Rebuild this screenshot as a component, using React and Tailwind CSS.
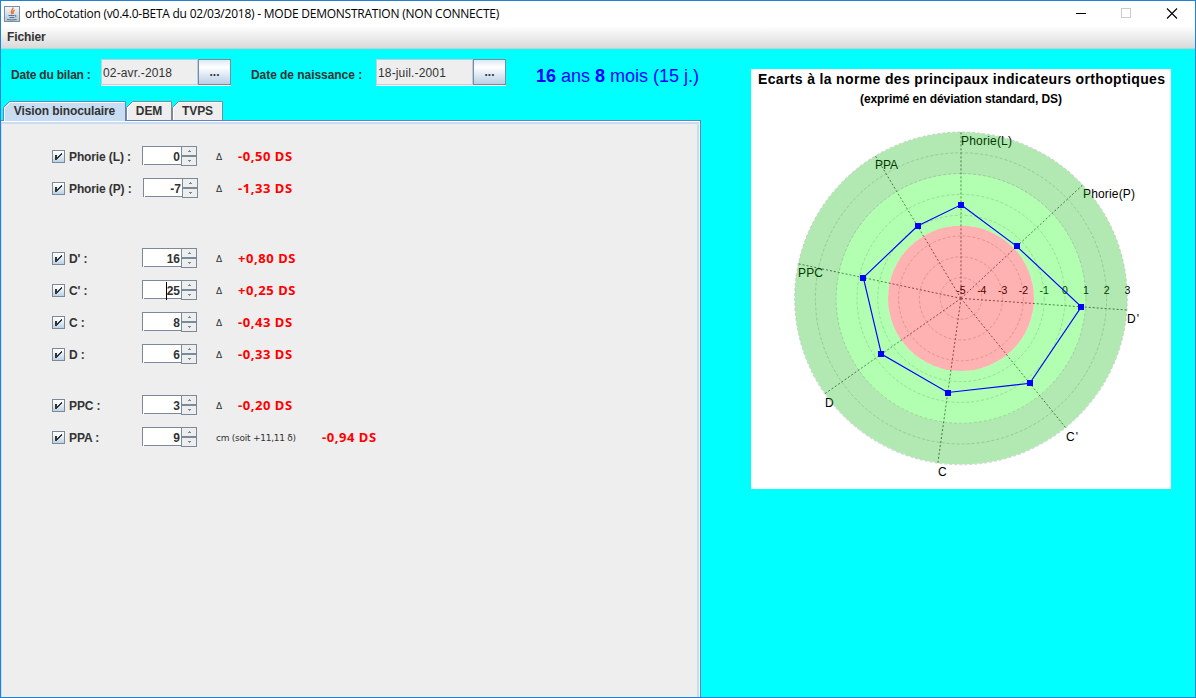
const ROWS = [
  { label: "Phorie (L) :", value: "0", ds: "-0,50 DS", gap: "mt-0" },
  { label: "Phorie (P) :", value: "-7", ds: "-1,33 DS", gap: "mt-0", inset: true },
  { label: "D' :", value: "16", ds: "+0,80 DS", gap: "mt-[38px]" },
  { label: "C' :", value: "25", ds: "+0,25 DS", gap: "mt-0", caret: true },
  { label: "C :", value: "8", ds: "-0,43 DS", gap: "mt-0" },
  { label: "D :", value: "6", ds: "-0,33 DS", gap: "mt-0" },
  { label: "PPC :", value: "3", ds: "-0,20 DS", gap: "mt-[19px]" },
  { label: "PPA :", value: "9", ds: "-0,94 DS", gap: "mt-0", unit: "cm (soit +11,11 δ)" },
];

const AXES = [
  { name: "Phorie(L)", value: -0.5, x: 210, y: 76, w: 51 },
  { name: "Phorie(P)", value: -1.33, x: 332, y: 129, w: 52 },
  { name: "D'", value: 0.8, x: 376, y: 254, w: 12 },
  { name: "C'", value: 0.25, x: 315, y: 372, w: 12 },
  { name: "C", value: -0.43, x: 187, y: 407, w: 8 },
  { name: "D", value: -0.33, x: 74, y: 338, w: 8 },
  { name: "PPC", value: -0.2, x: 47, y: 208, w: 25 },
  { name: "PPA", value: -0.94, x: 124, y: 100, w: 23 },
];
const CX = 210;
const CY = 229.4;
const UNIT = 20.8;
const STEP = (47 * Math.PI) / 180;
const at = (i, r) => [CX + r * Math.sin(i * STEP), CY - r * Math.cos(i * STEP)];

function Radar() {
  const pts = AXES.map((a, i) => at(i, (a.value + 5) * UNIT));
  return (
    <svg width="420" height="420" viewBox="0 0 420 420" className="block bg-white" fontFamily="'Liberation Sans', Arial, sans-serif">
      <text x="7" y="15" fontSize="14" fontWeight="700" textLength="407">Ecarts à la norme des principaux indicateurs orthoptiques</text>
      <text x="109" y="34" fontSize="12" fontWeight="700" textLength="202">(exprimé en déviation standard, DS)</text>
      {[1, 2, 3, 4, 5, 6, 7, 8].map((n) => (
        <circle key={n} cx={CX} cy={CY} r={n * UNIT} fill="none" stroke="#d4d4d4" strokeWidth="1" strokeDasharray="3 2" />
      ))}
      {AXES.map((a, i) => {
        const [x, y] = at(i, 8 * UNIT);
        return <line key={a.name} x1={CX} y1={CY} x2={x} y2={y} stroke="#606060" strokeWidth="1" strokeDasharray="2 2" />;
      })}
      {AXES.map((a) => (
        <text key={a.name} x={a.x} y={a.y} fontSize="12" textLength={a.w}>{a.name}</text>
      ))}
      {[-5, -4, -3, -2, -1, 0, 1, 2, 3].map((v, i) => (
        <text key={v} x={CX + i * UNIT} y="225" fontSize="10.5" textAnchor="middle">{v}</text>
      ))}
      <g fillOpacity="0.3">
        <path fill="#00b200" fillRule="evenodd" d="M210 63.3a166.2 166 0 1 0 .01 0zM210 105a124.7 124.7 0 1 0 .01 0z" />
        <path fill="#00ff00" fillRule="evenodd" d="M210 105a124.7 124.7 0 1 0 .01 0zM210 156.7a73 72.7 0 1 0 .01 0z" />
        <ellipse fill="#ff0000" cx="210" cy="229.4" rx="73" ry="72.7" />
      </g>
      <polygon points={pts.map((p) => p.join(",")).join(" ")} fill="none" stroke="#0000ff" strokeWidth="1.15" />
      {pts.map(([x, y], i) => (
        <rect key={i} x={Math.round(x) - 3} y={Math.round(y) - 3} width="6" height="6" fill="#0000ff" shapeRendering="crispEdges" />
      ))}
    </svg>
  );
}

function DateField({ value }) {
  return (
    <div className="flex h-[27px] bg-white pb-px">
      <div className="h-[26px] w-[97px] border border-[#b8cfe5] bg-[#eeeeee] pl-px text-[12px] leading-[27px] text-[#333]">
        <span className="tracking-[0.15px]">{value}</span>
      </div>
      <button className="h-[26px] w-[33px] border border-[#7a8a99] bg-linear-to-b from-[#dde8f3] via-white via-30% to-[#b8cfe5] text-[12px] leading-[24px] font-bold text-[#333]">...</button>
    </div>
  );
}

function Arrow({ up }) {
  return (
    <div className="flex h-[10px] w-[16px] items-center justify-center border border-[#7a8a99] bg-[#eeeeee]">
      <svg width="3" height="2" viewBox="0 0 3 2" shapeRendering="crispEdges">
        <path fill="#7a8a99" d={up ? "M1 0h1v1h1v1h-3v-1h1z" : "M0 0h3v1h-1v1h-1v-1h-1z"} />
      </svg>
    </div>
  );
}

function Row({ row }) {
  return (
    <div className={"flex h-[32px] items-center " + row.gap}>
      <svg width="13" height="13" viewBox="0 0 13 13" className="mr-[4px] shrink-0">
        <defs>
          <linearGradient id="check" x1="0" y1="0" x2="0" y2="1">
            <stop offset="0" stopColor="#ffffff" />
            <stop offset="0.3" stopColor="#f2f7fb" />
            <stop offset="1" stopColor="#b8cfe5" />
          </linearGradient>
        </defs>
        <rect x="0.5" y="0.5" width="12" height="12" fill="url(#check)" stroke="#7a8a99" />
        <path fill="#333" shapeRendering="crispEdges" d="M3 5h2v2h1v-1h1v-1h1v-1h1v-1h1v2h-1v1h-1v1h-1v1h-1v1h-1v1h-2z" />
      </svg>
      <div className={"pt-px text-[12px] font-bold tracking-[-0.12px] whitespace-nowrap text-[#333] " + (row.inset ? "w-[74px]" : "w-[73px]")}>{row.label}</div>
      <div className={"flex h-[20px] w-[55px] " + (row.inset ? "mr-[18px]" : "mr-[19px]")}>
        <div className="h-[19px] w-[39px] border-t border-l border-[#7a8a99] bg-white pb-px">
          <div className="ml-px flex h-[18px] items-center justify-end border-b border-[#7a8a99] pt-[2px] pr-px text-[12px] font-bold text-[#333]">
            <span className={row.caret ? "border-l border-black" : ""}>{row.value}</span>
          </div>
        </div>
        <div className="w-[16px]"><Arrow up /><Arrow /></div>
      </div>
      <div className={"pt-[4px] font-['DejaVu_Sans'] whitespace-nowrap text-[#333] " + (row.unit ? "w-[106px] text-[9px] tracking-[-0.25px]" : "w-[22px] text-[9px]")}>{row.unit || "Δ"}</div>
      <div className="pt-[2px] font-['Noto_Sans',sans-serif] text-[13px] font-bold tracking-[0.55px] whitespace-nowrap text-[#ff0000]">{row.ds}</div>
    </div>
  );
}

function Tab({ label, width, active }) {
  const edge = width - 0.5;
  return (
    <div className="relative flex h-[20px] items-center justify-center" style={{ width }}>
      <svg className="absolute inset-0" width={width} height="20">
        <path d={`M0.5 20V6.5L6.5 0.5H${edge}V20`} fill={active ? "#c8ddf2" : "#eeeeee"} stroke={active ? "#6382bf" : "#7a8a99"} />
        <path d={`M1.5 20V7L7 1.5H${width - 1}`} fill="none" stroke="#fff" />
        {!active && <path d={`M0 19.5H${width}`} stroke="#6382bf" />}
      </svg>
      <span className="relative text-[12px] font-bold tracking-[-0.1px] whitespace-nowrap text-[#333]">{label}</span>
    </div>
  );
}

export default function App() {
  return (
    <div className="flex h-[698px] w-[1196px] flex-col overflow-hidden border border-[#1f82d6] bg-[#00ffff] font-['Liberation_Sans',Arial,sans-serif]">
      <header className="flex h-[25px] shrink-0 items-center bg-white">
        <svg className="ml-[3px]" width="16" height="16" viewBox="0 0 16 16">
          <defs>
            <linearGradient id="app" x1="0" y1="0" x2="0" y2="1">
              <stop offset="0" stopColor="#f8f8f8" />
              <stop offset="1" stopColor="#b4c6d4" />
            </linearGradient>
          </defs>
          <rect x="0.5" y="0.5" width="15" height="15" fill="url(#app)" stroke="#7590a5" />
          <path d="M8.8 1.5C10 3.5 5.5 5 8 8M10.8 4C8.5 5.2 8.5 6.2 9.3 8" fill="none" stroke="#e8702f" strokeWidth="1.3" />
          <path d="M4.5 9.5h6M5.5 11.5h4.5M3 13.5q4.500 1 9.500 0M10.800 9.300q2.500 0 0 2.200" fill="none" stroke="#4d7595" />
        </svg>
        <span className="ml-[5px] font-['Open_Sans',sans-serif] text-[12px] tracking-[-0.23px] whitespace-nowrap text-black">orthoCotation (v0.4.0-BETA du 02/03/2018) - MODE DEMONSTRATION (NON CONNECTE)</span>
        <svg className="ml-auto" width="120" height="25" viewBox="0 0 120 25">
          <path d="M1 12.5h10" stroke="#000" />
          <rect x="46.5" y="7.5" width="9" height="9" fill="none" stroke="#ccc" />
          <path d="M92 7.5l10 10M102 7.5l-10 10" stroke="#000" strokeWidth="1.1" />
        </svg>
      </header>
      <nav className="flex h-[23px] shrink-0 items-center border-b border-[#ccc] bg-linear-to-b from-white to-[#dadada] pl-[6px] text-[12px] font-bold tracking-[-0.1px] text-[#333]">Fichier</nav>
      <main className="flex grow">
        <section className="flex w-[700px] flex-col">
          <div className="flex h-[52px] shrink-0 items-start pt-[10px] pl-[10px] text-[12px] font-bold text-[#333]">
            <span className="mt-[7px] w-[90px] tracking-[-0.2px] whitespace-nowrap">Date du bilan :</span>
            <div className="font-normal"><DateField value="02-avr.-2018" /></div>
            <span className="mt-[7px] ml-[20px] w-[125px] tracking-[-0.05px] whitespace-nowrap">Date de naissance :</span>
            <div className="font-normal"><DateField value="18-juil.-2001" /></div>
            <span className="mt-[4px] ml-[30px] text-[18px] font-normal whitespace-nowrap text-[#0000ff]"><b>16</b> ans <b>8</b> mois (15 j.)</span>
          </div>
          <div className="flex h-[19px] shrink-0 pl-[2px]">
            <Tab label="Vision binoculaire" width={123} active />
            <Tab label="DEM" width={46} />
            <Tab label="TVPS" width={51} />
          </div>
          <div className="grow border-t border-r border-[#6382bf]">
            <div className="h-full border-r border-l border-t border-t-white border-r-white border-l-[#c8ddf2]">
              <div className="h-full border-t-2 border-r-2 border-[#c8ddf2] bg-[#eeeeee] pt-[16px] pl-[50px]">
                {ROWS.map((row) => <Row key={row.label} row={row} />)}
              </div>
            </div>
          </div>
        </section>
        <aside className="pt-[20px] pl-[50px]"><Radar /></aside>
      </main>
    </div>
  );
}
